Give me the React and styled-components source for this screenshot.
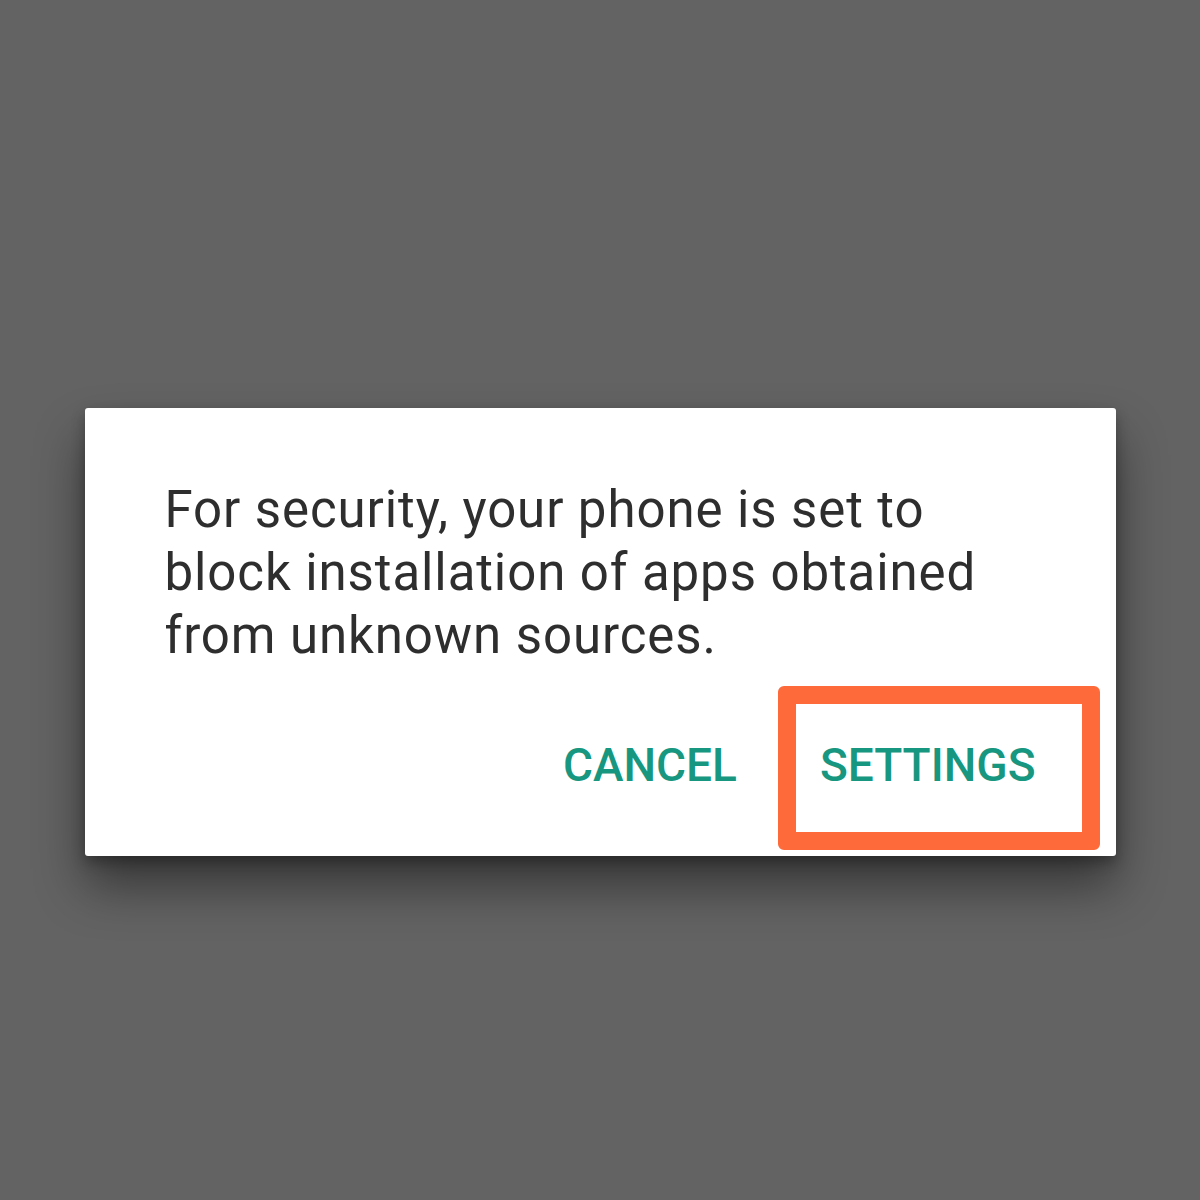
import styled, { createGlobalStyle } from 'styled-components';

const GlobalStyle = createGlobalStyle`
  html, body {
    margin: 0;
    padding: 0;
    background: #636363;
  }
  body {
    font-family: Roboto, "Liberation Sans", sans-serif;
  }
`;

const App = () => {
  return (
    <>
      <GlobalStyle />
      <St.Screen>
        <St.Dialog>
          <St.Message>
            For security, your phone is set to block installation of apps obtained from unknown
            sources.
          </St.Message>
          <St.Actions>
            <St.Button type='button'>CANCEL</St.Button>
            <St.Button type='button'>
              SETTINGS
              <St.Highlight />
            </St.Button>
          </St.Actions>
        </St.Dialog>
      </St.Screen>
    </>
  );
};

export default App;

const St = {
  Screen: styled.main`
    display: flex;
    flex-direction: column;
    align-items: center;

    width: 1200px;
    height: 1200px;
    padding-top: 408px;
    box-sizing: border-box;
    background: #636363;
  `,
  Dialog: styled.section`
    display: flex;
    flex-direction: column;

    width: 1031px;
    height: 448px;
    box-sizing: border-box;
    padding: 70px 80px 0 80px;

    background: #ffffff;
    border-radius: 3px;
    box-shadow: 0 30px 50px rgba(0, 0, 0, 0.45), 0 6px 14px rgba(0, 0, 0, 0.3);
  `,
  Message: styled.p`
    margin: 0;
    width: 860px;

    font-size: 51px;
    line-height: 63px;
    letter-spacing: 0.9px;
    color: #2e2e2e;
  `,
  Actions: styled.div`
    display: flex;
    justify-content: flex-end;
    gap: 83px;

    margin-top: 72px;
  `,
  Button: styled.button`
    position: relative;

    padding: 0;
    border: none;
    background: none;

    font-family: Roboto, "Liberation Sans", sans-serif;
    font-size: 46px;
    font-weight: 500;
    line-height: 52px;
    color: #17977f;
  `,
  Highlight: styled.span`
    position: absolute;
    top: -53px;
    left: -42px;
    right: -64px;
    height: 164px;
    box-sizing: border-box;

    border: 18px solid #ff6a3a;
    border-radius: 6px;
  `,
};
